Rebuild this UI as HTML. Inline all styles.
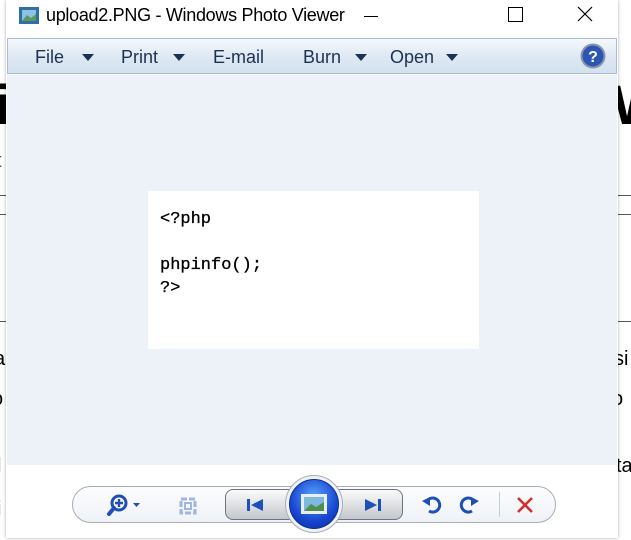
<!DOCTYPE html>
<html style="overflow:hidden"><head><style>
html,body{margin:0;width:631px;height:540px;overflow:hidden}
body{background:#fff;position:relative;font-family:"Liberation Sans",sans-serif}
.a{position:absolute}
.clip{left:0;top:0;width:631px;height:540px;overflow:hidden}
.win{left:6px;top:0;width:612px;height:538px;background:#fff;box-shadow:0 0 3px rgba(0,0,0,.35)}
.tb{left:7px;top:38px;width:610px;height:36px;background:linear-gradient(#f4f8fc,#dde8f3 55%,#d3e1ef);border:1px solid #a9bdd4;box-sizing:border-box}
.m{top:47px;font-size:18px;color:#1e3152}
.tri{width:0;height:0;border-left:6px solid transparent;border-right:6px solid transparent;border-top:7px solid #1e3152;top:54px}
.code{font-family:"Liberation Mono","DejaVu Sans Mono",monospace;font-size:17px;color:#000;line-height:23px;-webkit-text-stroke:0.3px #000}
</style></head><body>
<div class="a clip">
<div class="a" style="left:-4px;top:72px;font-size:56px;font-weight:bold">i</div>
<div class="a" style="left:612px;top:72px;font-size:56px;font-weight:bold">W</div>
<div class="a" style="left:-4px;top:150px;font-size:20px;color:#444">t</div>
<div class="a" style="left:0;top:195px;width:631px;height:1px;background:#555"></div>
<div class="a" style="left:0;top:214px;width:631px;height:1px;background:#555"></div>
<div class="a" style="left:0;top:321px;width:631px;height:1px;background:#555"></div>
<div class="a" style="left:-6px;top:348px;font-size:20px">a</div>
<div class="a" style="left:614px;top:348px;font-size:20px">si</div>
<div class="a" style="left:-8px;top:388px;font-size:20px">o</div>
<div class="a" style="left:612px;top:388px;font-size:20px">o</div>
<div class="a" style="left:-3px;top:455px;font-size:20px">l</div>
<div class="a" style="left:616px;top:455px;font-size:20px">ta</div>
<div class="a" style="left:-3px;top:498px;font-size:20px">i</div>
</div>

<div class="a win"></div>
<svg class="a" style="left:18px;top:6px" width="22" height="20"><rect x="1" y="1" width="20" height="17" fill="#2f6fa6"/><rect x="4" y="4" width="14" height="11" fill="#8fc1e4"/><path d="M4 15 L9 9 L13 12 L18 8 V15Z" fill="#5b9a5a"/></svg>
<div class="a" style="left:46px;top:5px;font-size:18px;color:#000;letter-spacing:-0.3px">upload2.PNG - Windows Photo Viewer</div>
<div class="a" style="left:364px;top:16px;width:14px;height:1px;background:#000"></div>
<div class="a" style="left:508px;top:7px;width:13px;height:13px;border:1px solid #000"></div>
<svg class="a" style="left:577px;top:6px" width="16" height="16"><path d="M1 1L15 15M15 1L1 15" stroke="#000" stroke-width="1.2"/></svg>
<div class="a tb"></div>
<div class="a m" style="left:35px">File</div><div class="a tri" style="left:82px"></div>
<div class="a m" style="left:121px">Print</div><div class="a tri" style="left:173px"></div>
<div class="a m" style="left:213px">E-mail</div>
<div class="a m" style="left:303px">Burn</div><div class="a tri" style="left:355px"></div>
<div class="a m" style="left:390px">Open</div><div class="a tri" style="left:446px"></div>
<svg class="a" style="left:580px;top:43px" width="26" height="26"><circle cx="13" cy="13" r="11.5" fill="#2d56b4" stroke="#8a96a8" stroke-width="2"/><text x="13" y="19" text-anchor="middle" font-size="16" font-weight="bold" fill="#fff" font-family="Liberation Sans">?</text></svg>
<div class="a" style="left:7px;top:75px;width:610px;height:390px;background:#edf2f9"></div>
<div class="a" style="left:148px;top:191px;width:331px;height:158px;background:#fff"></div>
<div class="a code" style="left:160px;top:208px">&lt;?php<br><br>phpinfo();<br>?&gt;</div>
<div class="a" style="left:72px;top:486px;width:484px;height:37px;border:1px solid #a8adb5;border-radius:19px;background:linear-gradient(#fdfdfe,#eef2f7);box-sizing:border-box"></div>
<svg class="a" style="left:105px;top:493px" width="40" height="26"><circle cx="14" cy="10" r="7" fill="none" stroke="#1f4fb6" stroke-width="3"/><path d="M14 6v8M10 10h8" stroke="#1f4fb6" stroke-width="2.4"/><path d="M9 15L4 21" stroke="#1f4fb6" stroke-width="4" stroke-linecap="round"/><path d="M28 10h7l-3.5 4z" fill="#1f4fb6"/></svg>
<svg class="a" style="left:178px;top:496px" width="20" height="20"><rect x="3" y="3" width="14" height="14" fill="none" stroke="#9fb6e2" stroke-width="3" stroke-dasharray="6 2"/><rect x="7" y="7" width="6" height="6" fill="none" stroke="#9fb6e2" stroke-width="2"/></svg>
<div class="a" style="left:225px;top:489px;width:178px;height:31px;border:1px solid #6f747c;border-radius:8px;background:linear-gradient(#fbfbfb,#dfe1e4 50%,#c4c7cc);box-sizing:border-box"></div>
<svg class="a" style="left:244px;top:497px" width="22" height="16"><rect x="3" y="2" width="3" height="12" fill="#1c4fb8"/><path d="M19 2V14L7 8z" fill="#1c4fb8"/></svg>
<svg class="a" style="left:362px;top:497px" width="22" height="16"><rect x="16" y="2" width="3" height="12" fill="#1c4fb8"/><path d="M3 2V14L15 8z" fill="#1c4fb8"/></svg>
<div class="a" style="left:285px;top:475px;width:58px;height:58px;border-radius:50%;background:#eef1f5;border:1px solid #a8adb5;box-sizing:border-box"></div>
<div class="a" style="left:289px;top:479px;width:50px;height:50px;border-radius:50%;background:radial-gradient(circle at 50% 35%,#5aa6ff,#1846d0 60%,#0a2a9a);border:1px solid #0d2f8f;box-sizing:border-box"></div>
<svg class="a" style="left:300px;top:493px" width="28" height="22"><rect x="1" y="1" width="26" height="20" fill="#e8eef6"/><rect x="4" y="4" width="20" height="14" fill="#7fb8de"/><path d="M4 18L11 11L16 14L24 9V18Z" fill="#4f8f4a"/></svg>
<svg class="a" style="left:420px;top:494px" width="22" height="22"><path d="M6 9A7 7 0 1 1 9 17" fill="none" stroke="#1c4fb8" stroke-width="3"/><path d="M2 7l8-4v9z" fill="#1c4fb8"/></svg>
<svg class="a" style="left:459px;top:494px" width="22" height="22"><path d="M16 9A7 7 0 1 0 13 17" fill="none" stroke="#1c4fb8" stroke-width="3"/><path d="M20 7l-8-4v9z" fill="#1c4fb8"/></svg>
<div class="a" style="left:499px;top:492px;width:1px;height:25px;background:#c8ccd2"></div>
<svg class="a" style="left:515px;top:495px" width="20" height="20"><path d="M3 3L17 17M17 3L3 17" stroke="#d0312d" stroke-width="2.6"/></svg>
</body></html>
